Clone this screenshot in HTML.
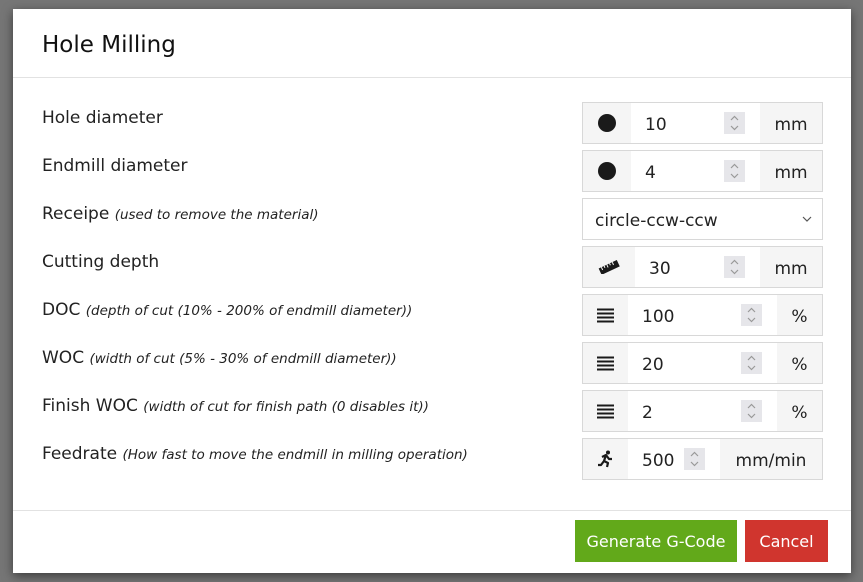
<!DOCTYPE html>
<html><head><style>
body{margin:0;width:863px;height:582px;background:#767676;position:relative;overflow:hidden;font-family:"DejaVu Sans","Liberation Sans",sans-serif;color:#222}
.dlg{position:absolute;left:13px;top:9px;width:838px;height:564px;background:#fff;box-shadow:0 3px 10px rgba(0,0,0,.5)}
.title{position:absolute;left:29px;top:23px;font-size:23px;color:#111}
.hr{position:absolute;left:0;right:0;height:1px;background:#e2e2e2}
.lab{position:absolute;left:29px;font-size:17px;color:#222;margin-top:2px}
.lab i{font-size:13.5px;font-style:italic}
.grp{position:absolute;left:569px;width:239px;height:40px;border:1px solid #d8d8d8;display:flex;background:#fff;font-size:17px}
.ad{background:#f5f5f5;display:flex;align-items:center;justify-content:center;flex:none;padding-top:3px;box-sizing:border-box}
.in{flex:1;position:relative;display:flex;align-items:center;padding-left:14px;padding-top:3px}
.sp{position:absolute;top:9px;right:15px;width:21px;height:22px;background:#e6e6ea}
.dot{width:18px;height:18px;border-radius:50%;background:#1a1a1a;margin-top:-3px}
.btn{position:absolute;top:511px;height:42px;color:#fff;font-size:16px;display:flex;align-items:center;justify-content:center}
</style></head><body>
<div class="dlg">
<div class="title">Hole Milling</div>
<div class="hr" style="top:68px"></div>
<div class="lab" style="top:97px">Hole diameter</div>
<div class="lab" style="top:145px">Endmill diameter</div>
<div class="lab" style="top:193px">Receipe <i>(used to remove the material)</i></div>
<div class="lab" style="top:241px">Cutting depth</div>
<div class="lab" style="top:289px">DOC <i>(depth of cut (10% - 200% of endmill diameter))</i></div>
<div class="lab" style="top:337px">WOC <i>(width of cut (5% - 30% of endmill diameter))</i></div>
<div class="lab" style="top:385px">Finish WOC <i>(width of cut for finish path (0 disables it))</i></div>
<div class="lab" style="top:433px">Feedrate <i>(How fast to move the endmill in milling operation)</i></div>

<svg width="0" height="0" style="position:absolute"><defs><symbol id="s" viewBox="0 0 21 22"><path d="M7 8l3.5-3.5L14 8M7 14l3.5 3.5L14 14" stroke="#999" stroke-width="1.2" fill="none"/></symbol></defs></svg>

<div class="grp" style="top:93px"><div class="ad" style="width:48px"><div class="dot"></div></div><div class="in">10<svg class="sp"><use href="#s"/></svg></div><div class="ad" style="width:62px">mm</div></div>
<div class="grp" style="top:141px"><div class="ad" style="width:48px"><div class="dot"></div></div><div class="in">4<svg class="sp"><use href="#s"/></svg></div><div class="ad" style="width:62px">mm</div></div>
<div class="grp" style="top:189px"><div class="in" style="padding-left:12px">circle-ccw-ccw<svg style="position:absolute;right:10px;top:16px" width="10" height="8"><path d="M1 2l4 4 4-4" stroke="#555" stroke-width="1.2" fill="none"/></svg></div></div>
<div class="grp" style="top:237px"><div class="ad" style="width:52px;padding-top:0"><svg width="22" height="14" viewBox="0 0 22 14"><g transform="rotate(-25 11 7)"><rect x="1" y="4" width="20" height="7" fill="#1a1a1a"/><path d="M4 4v3M7 4v2M10 4v3M13 4v2M16 4v3" stroke="#fff" stroke-width="1"/></g></svg></div><div class="in">30<svg class="sp"><use href="#s"/></svg></div><div class="ad" style="width:62px">mm</div></div>
<div class="grp" style="top:285px"><div class="ad" style="width:45px;padding-top:0"><svg width="17" height="15"><path d="M0 1.5h17M0 5.5h17M0 9.5h17M0 13.5h17" stroke="#1a1a1a" stroke-width="2"/></svg></div><div class="in">100<svg class="sp"><use href="#s"/></svg></div><div class="ad" style="width:45px">%</div></div>
<div class="grp" style="top:333px"><div class="ad" style="width:45px;padding-top:0"><svg width="17" height="15"><path d="M0 1.5h17M0 5.5h17M0 9.5h17M0 13.5h17" stroke="#1a1a1a" stroke-width="2"/></svg></div><div class="in">20<svg class="sp"><use href="#s"/></svg></div><div class="ad" style="width:45px">%</div></div>
<div class="grp" style="top:381px"><div class="ad" style="width:45px;padding-top:0"><svg width="17" height="15"><path d="M0 1.5h17M0 5.5h17M0 9.5h17M0 13.5h17" stroke="#1a1a1a" stroke-width="2"/></svg></div><div class="in">2<svg class="sp"><use href="#s"/></svg></div><div class="ad" style="width:45px">%</div></div>
<div class="grp" style="top:429px"><div class="ad" style="width:45px;padding-top:0"><svg width="16" height="18" viewBox="0 0 16 18"><circle cx="10" cy="2.5" r="2" fill="#1a1a1a"/><path d="M4 7l4-2 3 4 3 0M8 5l-2 6 4 2-1 4M6 11l-3 4-3 0" stroke="#1a1a1a" stroke-width="2.2" fill="none" stroke-linejoin="round"/></svg></div><div class="in">500<svg class="sp"><use href="#s"/></svg></div><div class="ad" style="width:102px">mm/min</div></div>

<div class="hr" style="top:501px"></div>
<div class="btn" style="left:562px;width:162px;background:#62a91a">Generate G-Code</div>
<div class="btn" style="left:732px;width:83px;background:#d0352e">Cancel</div>
</div>
</body></html>
